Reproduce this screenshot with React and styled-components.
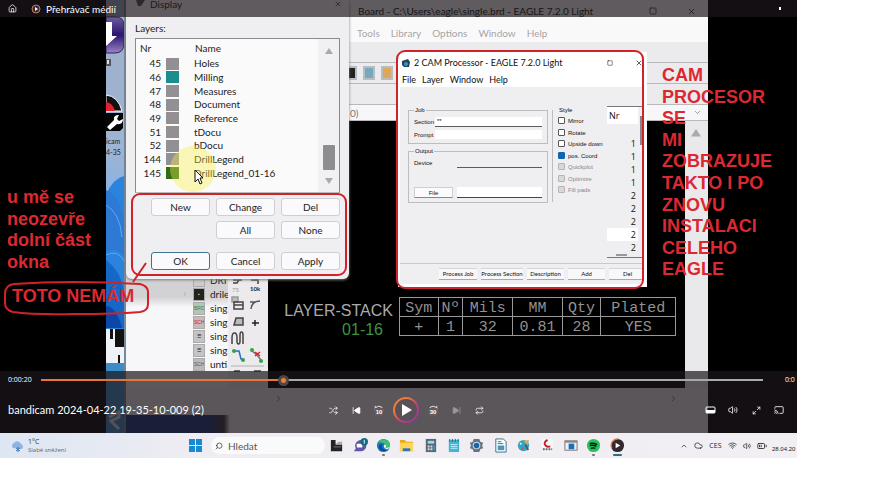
import React from "react";
import styled, { createGlobalStyle } from "styled-components";
import {
  Home, Shuffle, SkipBack, SkipForward, RotateCcw, RotateCw, Repeat,
  Volume2, Maximize2, Cast, ChevronUp, ChevronDown, ChevronRight, Cloud, Wifi,
  BatteryMedium, Search, X, Square,
} from "lucide-react";

const RED = "#cf2229";

const Global = createGlobalStyle`
  * { box-sizing: border-box; }
  body { margin: 0; background: #fff; font-family: Lato, "Open Sans", "Noto Sans", sans-serif; font-size: 10px; color: #222; }
  button, input { font: inherit; color: inherit; margin: 0; padding: 0; }
  svg { display: block; flex: none; }
`;

/* ---------- page and video ---------- */
const Page = styled.main`
  padding-right: 73px;
`;
const Screen = styled.div`
  overflow: hidden;
`;
const Player = styled.section`
  position: relative;
  background: #000;
  overflow: hidden;
`;
const Frame = styled.div`
  display: flex;
  height: 433px;
  margin: 0 89px 0 106px;
`;
const Eagle = styled.div`
  flex: 1;
  min-width: 0;
  display: flex;
  flex-direction: column;
  background: #f0eff1;
`;
const EagleTitle = styled.div`
  display: flex;
  align-items: center;
  gap: 30px;
  height: 17px;
  padding: 5px 12px 0 232px;
  color: #111;
  background: #fff;
  span { flex: 1; white-space: nowrap; overflow: hidden; }
`;
const EagleMenu = styled.nav`
  display: flex;
  gap: 11px;
  height: 25px;
  padding: 7px 0 0 231px;
  background: #faf9fa;
  color: #a5a5a8;
  line-height: 16px;
`;
const MenuButton = styled.button`
  border: 0;
  background: none;
  line-height: 16px;
`;
const ToolStrip = styled.div`
  display: flex;
  align-items: center;
  gap: 6px;
  height: ${(p) => p.$h}px;
  padding: 0 6px 0 ${(p) => p.$pad || 224}px;
  border-bottom: 1px solid #b9b9bc;
  background: ${(p) => p.$bg || "#ebeaec"};
  color: #777;
`;
const Tool = styled.i`
  width: 12px;
  height: 14px;
  background: ${(p) => p.$c};
  border: 2px solid #b9bcc0;
`;
const Push = styled.span`
  margin-left: auto;
`;
const EagleBody = styled.div`
  display: flex;
  height: 267px;
`;
const Tree = styled.ul`
  width: 102px;
  margin: 0;
  padding: 152px 0 0 56px;
  list-style: none;
  overflow: hidden;
  background: linear-gradient(#d2d2d4 0 176px, #f7f6f8 186px);
`;
const TreeItem = styled.li`
  display: flex;
  align-items: center;
  gap: 5px;
  height: 14px;
  padding-left: ${(p) => (p.$open ? 0 : 11)}px;
  white-space: nowrap;
`;
const FileIcon = styled.i`
  width: 12px;
  height: 13px;
  flex: none;
  border: 1px solid #aaa;
  background: ${(p) => p.$bg};
  color: ${(p) => p.$c};
  font: normal 5px/11px "Liberation Sans", sans-serif;
  text-align: center;
  overflow: hidden;
`;
const ToolBox = styled.div`
  width: 40px;
  padding: 158px 2px 0;
  background: #eceaed;
  overflow: hidden;
`;
const Canvas = styled.div`
  flex: 1;
  min-width: 0;
  display: flex;
  align-items: flex-start;
  gap: 6px;
  padding: 176px 9px 0 12px;
  background: #000;
  overflow: hidden;
`;
const LayerStack = styled.div`
  width: 113px;
  padding-top: 4px;
  color: #aaa;
  font: 16px/19px "Liberation Sans", sans-serif;
  text-align: right;
  white-space: nowrap;
  span { display: block; padding-right: 10px; color: #3f9440; }
`;
const DrillTable = styled.table`
  flex: 1;
  height: 39px;
  border-collapse: collapse;
  table-layout: fixed;
  color: #929292;
  font: 15px/15px "Liberation Mono", monospace;
  text-align: center;
  th, td { padding: 3px 0 0; border: 1px solid #999; font-weight: 400; }
`;
const VScroll = styled.div`
  width: 23px;
  padding: 8px 6px;
  background: #e9e8ea;
`;
const HScroll = styled.div`
  display: flex;
  justify-content: space-between;
  flex: 1;
  padding: 6px 30px 0 148px;
  background: linear-gradient(90deg, #14377c 0 84px, #3e3338 98px, #f0eff1 104px) 0 27px / 100% 18px no-repeat #eeedef;
  color: #555;
`;

/* ---------- layer dialog ---------- */
const Dialog = styled.section`
  position: absolute;
  left: 126px;
  top: 0;
  width: 223px;
  height: 279px;
  padding: 0 9px;
  background: #efeef0;
  border-radius: 0 0 6px 6px;
  box-shadow: 0 1px 3px #777;
`;
const DialogTitle = styled.h2`
  display: flex;
  justify-content: space-between;
  height: 17px;
  margin: 0 -9px;
  padding: 0 7px 0 10px;
  background: #fff;
  font-size: 10px;
  line-height: 8px;
  font-weight: 400;
  span { display: flex; gap: 5px; }
`;
const LayersLabel = styled.div`
  height: 21px;
  line-height: 22px;
`;
const LayerBox = styled.div`
  display: flex;
  height: 155px;
  border: 1px solid #8a8a8e;
  border-bottom-color: #bbb;
  background: #fbfafb;
`;
const LayerTable = styled.table`
  flex: 1;
  height: 141px;
  border-collapse: collapse;
  line-height: 13px;
  th, td { padding: 0; font-weight: 400; text-align: left; white-space: nowrap; }
  th { height: 18px; padding-left: 4px; }
  td:first-child { width: 30px; text-align: right; padding-right: 5px; padding-left: 0; }
  td:nth-child(2) { width: 22px; }
  td:last-child { padding-left: 6px; }
  th:last-child { padding-left: 7px; }
`;
const Swatch = styled.i`
  display: block;
  width: 13px;
  height: 12px;
  background: ${(p) => p.$c};
`;
const ListScroll = styled.div`
  display: flex;
  flex-direction: column;
  align-items: center;
  width: 21px;
  padding: 9px 0 8px;
  background: #f1f0f2;
`;
const Thumb = styled.i`
  width: 12px;
  height: 25px;
  margin: auto 0 8px;
  border-radius: 1px;
  background: #8d8c8f;
`;
const Buttons = styled.div`
  display: grid;
  grid-template-columns: repeat(3, 1fr);
  grid-template-rows: 18px 18px 18px;
  row-gap: 5px;
  column-gap: 6px;
  padding: 5px 0 0 16px;
`;
const Button = styled.button`
  grid-column: ${(p) => p.$col || "auto"};
  margin-top: ${(p) => (p.$last ? 8 : 0)}px;
  height: 18px;
  border: 1px solid ${(p) => (p.$main ? "#3b7593" : "#cfced1")};
  border-radius: 3px;
  background: #faf9fb;
`;
const Halo = styled.div`
  position: absolute;
  left: 170px;
  top: 146px;
  width: 46px;
  height: 46px;
  border-radius: 50%;
  background: rgba(248, 240, 70, 0.38);
  svg { margin: 23px 0 0 24px; }
`;

/* ---------- CAM processor ---------- */
const Cam = styled.section`
  position: absolute;
  left: 398px;
  top: 52px;
  width: 249px;
  height: 235px;
  overflow: hidden;
  display: flex;
  flex-direction: column;
  background: #efeef0;
  border: solid #fff;
  border-width: 2px 4px 3px 2px;
  font: 6px/8px "Liberation Sans", sans-serif;
  color: #111;
`;
const CamTitle = styled.h2`
  display: flex;
  align-items: center;
  gap: 4px;
  height: 18px;
  margin: 0;
  padding-left: 2px;
  background: #fff;
  font: 400 9px/18px Lato, sans-serif;
  span { flex: 1; }
`;
const CamMenu = styled.nav`
  display: flex;
  gap: 6px;
  height: 15px;
  padding-left: 2px;
  background: #fff;
  font: 9px/14px Lato, sans-serif;
  button { line-height: 14px; }
`;
const CamBody = styled.div`
  display: grid;
  grid-template-columns: 140px 51px 36px;
  column-gap: 4px;
  height: 177px;
  padding: 19px 0 5px 8px;
  border-bottom: 1px solid #c9c8cb;
`;
const Groups = styled.div`
  display: flex;
  flex-direction: column;
  gap: 3px;
`;
const Group = styled.fieldset`
  height: ${(p) => p.$h}px;
  min-width: 0;
  margin: 0;
  padding: 1px 5px 0;
  border: 1px solid #bdbcbf;
  border-width: ${(p) => (p.$plain ? "0 0 0 1px" : "1px")};
  legend { padding: 0 1px; }
`;
const Field = styled.label`
  display: grid;
  grid-template-columns: ${(p) => p.$w}px 1fr;
  align-items: center;
  height: 13px;
  input {
    width: 100%;
    min-width: 0;
    height: 10px;
    padding: 0 2px;
    border: 0;
    border-bottom: 1px solid ${(p) => (p.$faint ? "#eee" : "#5b5b5e")};
    background: ${(p) => (p.$bare ? "transparent" : "#fff")};
    font: inherit;
  }
`;
const FileRow = styled.div`
  display: flex;
  gap: 4px;
  padding-top: 18px;
  button { width: 39px; height: 11px; border: 1px solid #cfced1; border-bottom-color: #888; background: #fbfbfb; }
  input { flex: 1; min-width: 0; height: 11px; border: 0; border-bottom: 1px solid #444; background: #fff; }
`;
const Check = styled.label`
  display: flex;
  align-items: center;
  gap: 3px;
  height: 11px;
  margin-bottom: ${(p) => (p.$loose ? 1 : 0)}px;
  white-space: nowrap;
  color: ${(p) => (p.$off ? "#88878a" : "#111")};
  input {
    appearance: none;
    width: 7px;
    height: 7px;
    flex: none;
    border: 1px solid ${(p) => (p.$off ? "#b5b4b7" : "#555")};
    border-radius: 1px;
    background: ${(p) => (p.$off ? "#d8d7da" : "#fff")};
  }
  input:checked { background: #1264b0; border-color: #1264b0; }
`;
const NrList = styled.div`
  display: flex;
  border: solid #77767a;
  border-width: 1px 0;
`;
const NrColumn = styled.div`
  flex: 1;
`;
const NrTable = styled.table`
  width: 100%;
  border-collapse: collapse;
  font: 9px/13px "Open Sans", sans-serif;
  th { height: 30px; padding: 2px 0 0 2px; text-align: left; vertical-align: top; font-weight: 400; background: linear-gradient(#fff 0 17px, transparent 17px); }
  td { height: 13px; padding: 0 2px 0 0; text-align: right; }
  tr:nth-child(8) td { background: #fff; }
`;
const NrTrack = styled.i`
  display: block;
  width: 11px;
  height: 2px;
  margin-left: 9px;
  background: #99989b;
`;
const NrThumb = styled.i`
  width: 2px;
  height: 29px;
  margin: 9px 1px 0 2px;
  background: #88878a;
`;
const CamButtons = styled.div`
  display: grid;
  grid-template-columns: 38px 42px 37px 37px 37px;
  gap: 4px;
  padding: 4px 0 0 39px;
  button {
    display: flex;
    align-items: center;
    justify-content: center;
    height: 12px;
    border: solid #d5d4d7;
    border-width: 1px 0;
    border-bottom-color: #aaa9ac;
    background: #f8f7f9;
    font-family: Lato, sans-serif;
    white-space: nowrap;
  }
`;

/* ---------- red notes ---------- */
const Marker = styled.div`
  position: absolute;
  left: ${(p) => p.$x}px;
  top: ${(p) => p.$y}px;
  width: ${(p) => p.$w}px;
  height: ${(p) => p.$h}px;
  border: 2px solid ${RED};
  border-radius: 9px;
  pointer-events: none;
`;
const Note = styled.p`
  position: absolute;
  left: ${(p) => p.$x}px;
  top: ${(p) => p.$y}px;
  margin: 0;
  color: #dc2830;
  font: bold 18px/1.2 "Liberation Sans", sans-serif;
  white-space: pre;
`;
const Loop = styled.svg`
  position: absolute;
  left: 0;
  top: 260px;
`;

/* ---------- player chrome ---------- */
const TopBar = styled.header`
  position: absolute;
  inset: 0 0 auto 0;
  display: flex;
  align-items: center;
  gap: 5px;
  height: 17px;
  padding: 0 8px;
  background: rgba(27, 22, 26, 0.7);
  color: #fff;
  svg:first-child { margin-right: 9px; }
`;
const MinimizeDot = styled.i`
  width: 2px;
  height: 3px;
  margin: 0 8px 0 auto;
  background: #fff;
`;
const Controls = styled.footer`
  position: absolute;
  inset: auto 0 0 0;
  height: 62px;
  background: rgba(27, 22, 26, 0.7);
  color: #fff;
`;
const SeekRow = styled.div`
  display: grid;
  grid-template-columns: 33px 1fr 12px;
  align-items: center;
  height: 18px;
  padding-left: 8px;
  font: 7px/10px "Open Sans", sans-serif;
  white-space: nowrap;
`;
const Seek = styled.input`
  appearance: none;
  width: calc(100% - 22px);
  height: 2px;
  background: linear-gradient(90deg, #e8763a 33%, #aaa9aa 33%);
  &::-webkit-slider-thumb {
    appearance: none;
    width: 11px;
    height: 11px;
    border: 3px solid #4b484a;
    border-radius: 50%;
    background: #f47a35;
  }
`;
const PlayRow = styled.div`
  display: flex;
  align-items: center;
  height: 44px;
  padding: 0 10px 2px 8px;
`;
const VideoName = styled.h1`
  flex: 0 0 317px;
  margin: 0;
  font: 400 11px/16px Lato, sans-serif;
`;
const Icons = styled.div`
  display: flex;
  align-items: center;
  gap: 7px;
  margin-left: ${(p) => (p.$end ? "auto" : "0")};
`;
const IconButton = styled.button`
  position: relative;
  display: grid;
  place-items: center;
  width: 16px;
  height: 16px;
  border: 0;
  background: none;
  color: ${(p) => (p.$dim ? "#99979a" : "#fff")};
`;
const Skip = styled.span`
  position: absolute;
  inset: 6px 4px auto;
  background: #625b61;
  font: bold 6px/8px "Liberation Sans", sans-serif;
`;
const Play = styled.button`
  width: 26px;
  height: 26px;
  margin: 0 -1px;
  padding: 0;
  border: 0;
  background: none;
`;

/* ---------- taskbar ---------- */
const Taskbar = styled.nav`
  display: flex;
  align-items: center;
  height: 25px;
  padding-left: 11px;
  background: linear-gradient(90deg, #dde6f2, #efedf2 25%, #f1eff2);
  overflow: hidden;
`;
const Weather = styled.div`
  display: flex;
  align-items: center;
  gap: 3px;
  flex: 0 0 178px;
  font: 7px/9px "Open Sans", sans-serif;
  color: #333;
  span { display: block; color: #66656a; font-size: 6px; }
`;
const SearchBox = styled.label`
  display: flex;
  align-items: center;
  gap: 5px;
  flex: 0 0 114px;
  height: 17px;
  margin: 0 0 0 9px;
  padding-left: 4px;
  border-radius: 9px;
  background: #fbfafb;
  input { width: 70px; border: 0; background: none; outline: 0; }
  input::placeholder { color: #555; opacity: 1; }
`;
const Apps = styled.div`
  display: grid;
  grid-template-columns: repeat(13, 1fr);
  flex: 0 0 304px;
`;
const AppButton = styled.button`
  display: grid;
  justify-items: center;
  height: 21px;
  padding-top: 3px;
  border: 0;
  background: none;
  &::after {
    content: "";
    width: ${(p) => p.$dot || 0}px;
    height: 2px;
    margin-top: 1px;
    border-radius: 1px;
    background: ${(p) => (p.$dot > 4 ? "#2d6d84" : "#777")};
  }
`;
const Tray = styled.div`
  display: flex;
  align-items: center;
  justify-content: space-between;
  flex: 0 0 87px;
  margin-left: auto;
  margin-right: 4px;
  font: 7px/9px "Open Sans", sans-serif;
  color: #222;
`;
const Clock = styled.div`
  flex: 0 0 26px;
  padding: 8px 0 0 1px;
  font: 6px/9px "Liberation Sans", sans-serif;
  white-space: nowrap;
`;

const layers = [
  [45, "Holes"], [46, "Milling", "#1d8c8c"], [47, "Measures"], [48, "Document"],
  [49, "Reference"], [51, "tDocu"], [52, "bDocu"], [144, "DrillLegend"],
  [145, "DrillLegend_01-16", "#2f6d16"],
];
const files = [
  ["DRI", "", "#ccc", "#333"], ["drile", "▪", "#222", "#e5dc45"], ["sing", "BRD", "#b9c2b9", "#2d8a3b"],
  ["sing", "SCH", "#c9b9bc", "#c22"], ["sing", "☰", "#c4c3c6", "#222"], ["sing", "☰", "#c4c3c6", "#222"],
  ["unti", "SCH", "#b9b9bb", "#555"],
];

const Triangle = ({ down, w = 8, c = "#aaa" }) => (
  <svg width={w} height={w * 0.75} viewBox="0 0 8 6"><path d={down ? "M0 0h8L4 6z" : "M0 6h8L4 0z"} fill={c} /></svg>
);

const Wallpaper = () => (
  <svg width="20" height="433" viewBox="0 0 20 433">
    <defs>
      <linearGradient id="sky" x2="0" y2="1"><stop stopColor="#9fb0c8" /><stop offset=".35" stopColor="#9db4d4" /><stop offset=".42" stopColor="#8fb2de" /></linearGradient>
      <linearGradient id="vio" x2="0" y2="1"><stop stopColor="#6d5c9c" /><stop offset=".5" stopColor="#2c1470" /><stop offset="1" stopColor="#9a83c4" /></linearGradient>
    </defs>
    <rect width="20" height="433" fill="url(#sky)" />
    <path d="M0 17h10q8 0 8 9v17q0 10-9 10H0z" fill="url(#vio)" stroke="#33215c" />
    <path d="M0 22h6v14h5L0 46z" fill="#fff" />
    <path d="M0 59h5v7H0z" fill="#555" /><path d="M1 60h2v4H1z" fill="#ddd" />
    <path d="M0 95q12 1 16 16H0z" fill="#111" stroke="#fff" strokeWidth="1" />
    <path d="M0 102q7 1 9 9H0z" fill="#e0232e" />
    <path d="M0 113h17v15l-3 3H0z" fill="#050505" />
    <path d="M1 127l7-7q-1-5 5-5l-2 4 2 2 4-2q0 6-6 5l-7 6z" fill="#fff" />
    <text x="0" y="144" fontSize="7" fontFamily="Lato" fill="#222">icam</text>
    <text x="0" y="155" fontSize="7" fontFamily="Lato" fill="#222">4-35</text>
    <path d="M0 194Q8 178 18 176V433H0z" fill="#2a83dc" />
    <path d="M0 190q14 6 18 30v36Q9 246 0 252z" fill="#2d79d4" />
    <path d="M0 205q14 8 16 32M0 255q12-6 18 6" stroke="#5aaaf2" fill="none" />
    <path d="M0 260q14 10 18 30v38H0z" fill="#1668c8" />
    <path d="M0 306q10 0 16 22H0z" fill="#0b46a8" />
    <path d="M0 329h18v34H0z" fill="#eef1f6" /><path d="M4 329h3v10H4zM9 329h9v18H9zM12 355h2v8h-2z" fill="#111" />
    <path d="M0 363h20v70H0z" fill="#3c8cc8" /><path d="M3 417l10-5v5l-8 4 8 8" stroke="#ddd" strokeWidth="3" fill="none" />
    <path d="M18 0h2v433h-2z" fill="#77889a" />
  </svg>
);

const ToolIcons = () => (
  <svg width="36" height="94" viewBox="230 279 36 94" fill="none" stroke="#444" strokeWidth="1.5">
    <path d="M233 280h9M233 283h4l2-3M251 280h7v4" />
    <text x="232" y="292" fontSize="6" fill="#999" stroke="none">75</text>
    <text x="250" y="291" fontSize="6" fontWeight="bold" fill="#222" stroke="none">10k</text>
    <path d="M232 297h6v5h-6z" fill="#bbb" stroke="#999" /><path d="M234 302h9v7h-9z" /><path d="M234 305h9" />
    <path d="M251 309q1-8 9-8M250 302h6" stroke="#555" />
    <path d="M234 325l2-7h7v7z" fill="#bbb" /><path d="M252 323h7M255 320v6" stroke="#222" />
    <path d="M232 344v-6q0-5 2.500-5t2.500 5v3q0 3 1.500 3t1.500-3v-6q0-3 1.500-3t1.500 3v9" />
    <path d="M234 351h5l2 8h2" stroke="#2b6ad0" /><path d="M252 351l5 4 4 5" stroke="#777" />
    <path d="M255 352l5 4m0-4l-5 4" stroke="#d2232a" />
    <g fill="#35a23d" stroke="none"><circle cx="234" cy="351" r="2" /><circle cx="243" cy="360" r="2" /><circle cx="252" cy="350" r="2" /><circle cx="261" cy="361" r="2" /></g>
    <path d="M231 366h33" stroke="#c5c4c7" /><path d="M234 371h6M254 371h7" />
  </svg>
);

const appIcons = [
  ["Zobrazení úloh", <g><path d="M2 2h5v5h7v7H2z" fill="#222" /><path d="M7 7l3-3h4v3z" fill="#aaa" /><path d="M5 9h8v1H5z" fill="#777" /></g>],
  ["Chat", <g><path d="M1 14l2-3a6 6 0 1 1 4 3z" fill="#6256a8" /><rect x="4" y="6" width="6" height="4" rx="1" fill="#fff" /><circle cx="12" cy="4" r="4" fill="#156a7b" /><path d="M12 2v4" stroke="#fff" /></g>],
  ["Edge", <g><circle cx="8" cy="8" r="7" fill="#1878c8" /><path d="M2 5a7 7 0 0 1 13 4q-3 3-6 0 2-3-2-4T2 5z" fill="#42bf6b" /><path d="M7 6q-3 5 5 7-7 3-9-3 0-4 4-4z" fill="#0b4f9c" /><path d="M9 7q3 1 1 3 2 1 5-1-1 3-4 3-4-2-2-5z" fill="#eee" /></g>, 3],
  ["Průzkumník", <g><path d="M1 2h5l2 2h7v10H1z" fill="#e9a820" /><path d="M1 5h14v9H1z" fill="#ffd45c" /><path d="M4 11h8v3H4z" fill="#2679b5" /></g>],
  ["Kalkulačka", <g><rect x="3" y="1" width="11" height="14" fill="#566674" /><path d="M5 3h7v3H5z" fill="#9bd5f0" /><path d="M5 8h2v2H5zM8 8h2v2H8zM5 11h2v2H5zM8 11h2v2H8z" fill="#ddd" /><path d="M11 8h2v5h-2z" fill="#3a91c4" /></g>],
  ["Poznámkový blok", <g><rect x="3" y="2" width="11" height="13" fill="#43b5d8" /><path d="M4 1v3M7 1v3M10 1v3M13 1v3" stroke="#315e73" /><path d="M5 7h7M5 9h7M5 11h7" stroke="#c4eff9" /></g>],
  ["Nastavení", <g><path d="M5 1h6l1 3 3 1-1 3 1 3-3 1-1 3H5l-1-3-3-1 1-3-1-3 3-1z" fill="#687380" /><circle cx="8" cy="8" r="4" fill="#d6dce3" /><circle cx="8" cy="8" r="3" fill="#1c65a9" /></g>],
  ["Writer", <g><path d="M3 1h8l3 3v11H3z" fill="#fff" stroke="#31718a" /><path d="M5 8h7v5H5z" fill="#4a98b8" /><path d="M5 4h4M5 6h6" stroke="#31718a" /></g>],
  ["Malování", <g><circle cx="8" cy="8" r="6" fill="#35a4bf" /><path d="M8 3l6-1-2 6z" fill="#e7a14d" /><circle cx="5" cy="6" r="1" fill="#fff" /><circle cx="7" cy="11" r="1" fill="#d04c4c" /><path d="M10 7l3 6" stroke="#2b6386" strokeWidth="2" /></g>],
  ["EAGLE", <g><rect x="2" y="1" width="12" height="14" fill="#f7f6f8" /><path d="M8 2q-5 3-2 6 2 2 5 1" stroke="#c4202b" strokeWidth="2" fill="none" /><path d="M3 12h10" stroke="#666" strokeWidth="2" strokeDasharray="2 1" /></g>],
  ["Okno", <g><rect x="2" y="3" width="13" height="10" fill="#eee" stroke="#777" /><path d="M2 3h13v2H2z" fill="#888" /><path d="M6 6h6v6H6z" fill="#1672be" /></g>],
  ["Spotify", <g><circle cx="8" cy="8" r="7" fill="#20c45a" /><path d="M4 6q4-1 8 1M4 8q4-1 7 1M5 11q3-1 5 0" stroke="#111" fill="none" strokeWidth="1.500" /></g>, 3],
  ["Přehrávač médií", <g><circle cx="8" cy="8" r="7" fill="#35262e" /><path d="M2 11A7 7 0 0 1 9 1" stroke="#e07a48" strokeWidth="1.500" fill="none" /><path d="M6 5v6l5-3z" fill="#fff" /></g>, 9],
];

const LayerDialog = () => (
  <Dialog aria-label="Display">
    <DialogTitle><span><svg width="9" height="6"><path d="M0 0h9L5 6H2z" fill="#555" /></svg>Display</span><X size={8} /></DialogTitle>
    <LayersLabel>Layers:</LayersLabel>
    <LayerBox>
      <LayerTable>
        <thead><tr><th>Nr</th><th /><th>Name</th></tr></thead>
        <tbody>
          {layers.map(([nr, name, color]) => (
            <tr key={nr}><td>{nr}</td><td><Swatch $c={color || "#929093"} /></td><td>{name}</td></tr>
          ))}
        </tbody>
      </LayerTable>
      <ListScroll><Triangle /><Thumb /><Triangle down /></ListScroll>
    </LayerBox>
    <Buttons>
      <Button>New</Button><Button>Change</Button><Button>Del</Button>
      <Button $col="2">All</Button><Button>None</Button>
      <Button $main $last $col="1">OK</Button><Button $last>Cancel</Button><Button $last>Apply</Button>
    </Buttons>
  </Dialog>
);

const checks = [["Mirror"], ["Rotate"], ["Upside down"], ["pos. Coord", true], ["Quickplot", false, true], ["Optimize", false, true], ["Fill pads", false, true]];

const CamProcessor = () => (
  <Cam aria-label="CAM Processor">
    <CamTitle>
      <svg width="8" height="9" viewBox="0 0 8 9"><path d="M0 2l6-2 2 3-1 5H2L0 6z" fill="#24435c" /><circle cx="4" cy="5" r="2" fill="#2d9ac4" /></svg>
      <span>2 CAM Processor - EAGLE 7.2.0 Light</span>
      <Square size={6} /><svg width="14" height="1" /><X size={8} />
    </CamTitle>
    <CamMenu>{["File", "Layer", "Window", "Help"].map((t) => <MenuButton key={t}>{t}</MenuButton>)}</CamMenu>
    <CamBody>
      <Groups>
        <Group $h={38}>
          <legend>Job</legend>
          <Field $w={21}>Section<input defaultValue="**" /></Field>
          <Field $w={21} $faint>Prompt<input /></Field>
        </Group>
        <Group $h={56}>
          <legend>Output</legend>
          <Field $w={43} $bare>Device<input /></Field>
          <FileRow><button>File</button><input aria-label="File" /></FileRow>
        </Group>
      </Groups>
      <Group $h={96} $plain>
        <legend>Style</legend>
        {checks.map(([label, on, off], i) => (
          <Check key={label} $off={off} $loose={i % 2 === 0}>
            <input type="checkbox" defaultChecked={on} disabled={off} />{label}
          </Check>
        ))}
      </Group>
      <NrList>
        <NrColumn>
          <NrTable>
            <thead><tr><th>Nr</th></tr></thead>
            <tbody>{[1, 1, 1, 1, 2, 2, 2, 2, 2].map((n, i) => <tr key={i}><td>{n}</td></tr>)}</tbody>
          </NrTable>
          <NrTrack />
        </NrColumn>
        <NrThumb />
      </NrList>
    </CamBody>
    <CamButtons>
      {["Process Job", "Process Section", "Description", "Add", "Del"].map((t) => <button key={t}>{t}</button>)}
    </CamButtons>
  </Cam>
);

export default function App() {
  return (
    <Page>
      <Global />
      <Screen>
        <Player>
          <Frame>
            <Wallpaper />
            <Eagle>
              <EagleTitle><span>Board - C:\Users\eagle\single.brd - EAGLE 7.2.0 Light</span><Square size={8} /><X size={9} /></EagleTitle>
              <EagleMenu>{["Tools", "Library", "Options", "Window", "Help"].map((t) => <MenuButton key={t}>{t}</MenuButton>)}</EagleMenu>
              <ToolStrip $h={21} />
              <ToolStrip $h={21} $pad={219}><Tool $c="#222" /><Tool $c="#75a9bd" /><Tool $c="#dda85c" /></ToolStrip>
              <ToolStrip $h={21} />
              <ToolStrip $h={16} $bg="#f7f6f8">0)<Push><ChevronDown size={9} /></Push></ToolStrip>
              <EagleBody>
                <Tree>
                  {files.map(([name, mark, bg, c], i) => (
                    <TreeItem key={i} $open={i === 1}>
                      {i === 1 && <ChevronRight size={6} color="#888" />}
                      <FileIcon $bg={bg} $c={c}>{mark}</FileIcon>{name}
                    </TreeItem>
                  ))}
                </Tree>
                <ToolBox><ToolIcons /></ToolBox>
                <Canvas>
                  <LayerStack>LAYER-STACK<span>01-16</span></LayerStack>
                  <DrillTable>
                    <colgroup>{[14, 9, 18, 18, 14, 27].map((w, i) => <col key={i} width={w + "%"} />)}</colgroup>
                    <thead><tr>{["Sym", "Nº", "Mils", "MM", "Qty", "Plated"].map((t) => <th key={t}>{t}</th>)}</tr></thead>
                    <tbody><tr>{["+", "1", "32", "0.81", "28", "YES"].map((t) => <td key={t}>{t}</td>)}</tr></tbody>
                  </DrillTable>
                </Canvas>
                <VScroll><Triangle w={10} /></VScroll>
              </EagleBody>
              <HScroll><ChevronRight size={9} /><ChevronRight size={9} /></HScroll>
            </Eagle>
          </Frame>
          <LayerDialog />
          <CamProcessor />
          <Halo>
            <svg width="10" height="16" viewBox="0 0 10 16"><path d="M1 1v12l3-3 2 5 2-1-2-5h3z" fill="#fff" stroke="#111" /></svg>
          </Halo>
          <Marker $x={131} $y={193} $w={216} $h={83} />
          <Marker $x={396} $y={50} $w={248} $h={239} />
          <Note $x={662} $y={65}>{"CAM\nPROCESOR\nSE\nMI\nZOBRAZUJE\nTAKTO I PO\nZNOVU\nINSTALACI\nCELEHO\nEAGLE"}</Note>
          <Note $x={7} $y={187}>{"u mě se\nneozevře\ndolní část\nokna"}</Note>
          <Note $x={12} $y={286}>TOTO NEMÁM</Note>
          <Loop width="150" height="60" viewBox="0 260 150 60" fill="none" stroke={RED} strokeWidth="2">
            <path d="M14 284Q70 280 140 284q8 2 8 8v12q0 7-8 8-25 2-65 2-40 1-62-2-8-2-8-9v-9q0-9 9-10zM133 282l13-19" />
          </Loop>
          <TopBar>
            <Home size={9} />
            <svg width="10" height="10" viewBox="0 0 10 10"><circle cx="5" cy="5" r="4" fill="#352c35" stroke="#c57a5b" /><path d="M4 3v4l3-2z" fill="#fff" /></svg>
            Přehrávač médií
            <MinimizeDot />
          </TopBar>
          <Controls>
            <SeekRow><span>0:00:20</span><Seek type="range" min="0" max="1000" defaultValue="333" aria-label="Pozice" /><span>0:0</span></SeekRow>
            <PlayRow>
              <VideoName>bandicam 2024-04-22 19-35-10-009 (2)</VideoName>
              <Icons>
                <IconButton aria-label="Náhodně"><Shuffle size={9} /></IconButton>
                <IconButton aria-label="Předchozí"><SkipBack size={9} fill="#fff" /></IconButton>
                <IconButton aria-label="Zpět 10 s"><RotateCcw size={10} /><Skip>10</Skip></IconButton>
                <Play aria-label="Přehrát">
                  <svg width="26" height="26" viewBox="0 0 26 26">
                    <defs><linearGradient id="ring" x1="0" y1="0" x2="1" y2="1"><stop offset=".3" stopColor="#ee7a3c" /><stop offset=".6" stopColor="#c23c7c" /><stop offset="1" stopColor="#8a3aa0" /></linearGradient></defs>
                    <circle cx="13" cy="13" r="12" fill="#5a5057" stroke="url(#ring)" strokeWidth="2" /><path d="M9 7v12l10-6z" fill="#fff" />
                  </svg>
                </Play>
                <IconButton aria-label="Vpřed 30 s"><RotateCw size={10} /><Skip>30</Skip></IconButton>
                <IconButton aria-label="Další" $dim><SkipForward size={9} fill="#99979a" /></IconButton>
                <IconButton aria-label="Opakovat"><Repeat size={9} /></IconButton>
              </Icons>
              <Icons $end>
                <IconButton aria-label="Titulky">
                  <svg width="11" height="8" viewBox="0 0 11 8"><rect x="1" y="1" width="9" height="6" rx="1" fill="none" stroke="#fff" /><path d="M1 4h9v3H1z" fill="#fff" /></svg>
                </IconButton>
                <IconButton aria-label="Hlasitost"><Volume2 size={10} /></IconButton>
                <IconButton aria-label="Celá obrazovka"><Maximize2 size={9} /></IconButton>
                <IconButton aria-label="Přenést"><Cast size={10} /></IconButton>
              </Icons>
            </PlayRow>
          </Controls>
        </Player>
        <Taskbar>
          <Weather>
            <svg width="14" height="12" viewBox="0 0 14 12"><path d="M2 8a3 3 0 0 1 1-5 4 4 0 0 1 7 1 3 3 0 0 1 1 5z" fill="#8fb3e2" /><path d="M7 7v5M5 8l4 3M9 8l-4 3" stroke="#3978bd" /></svg>
            <div>1°C<span>Slabé sněžení</span></div>
          </Weather>
          <svg width="13" height="13" viewBox="0 0 13 13"><path d="M0 0h6v6H0zM7 0h6v6H7zM0 7h6v6H0zM7 7h6v6H7z" fill="#168ad2" /></svg>
          <SearchBox><Search size={8} transform="scale(-1 1)" /><input placeholder="Hledat" aria-label="Hledat" /></SearchBox>
          <Apps>
            {appIcons.map(([name, art, dot]) => (
              <AppButton key={name} aria-label={name} $dot={dot}><svg width="15" height="15" viewBox="0 0 16 16">{art}</svg></AppButton>
            ))}
          </Apps>
          <Tray><ChevronUp size={8} /><Cloud size={9} />CES<Wifi size={9} /><Volume2 size={8} /><BatteryMedium size={10} /></Tray>
          <Clock>28.04.20</Clock>
        </Taskbar>
      </Screen>
    </Page>
  );
}
